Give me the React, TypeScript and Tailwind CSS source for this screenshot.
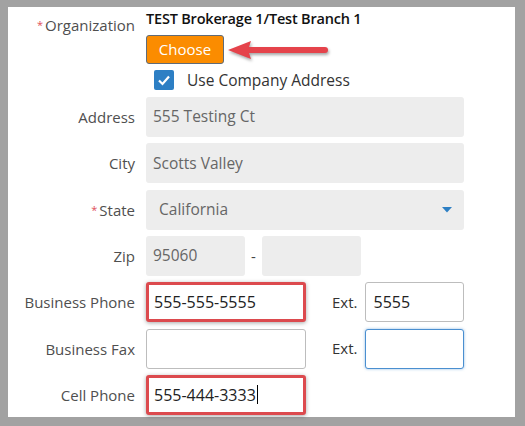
import * as React from "react";

const font = { fontFamily: "'Open Sans', Lato, sans-serif" };

function Label({ text, required }: { text: string; required?: boolean }) {
  return (
    <div className="w-[127px] shrink-0 text-right text-[15px] leading-[20px] text-[#4f4f4f]">
      {required ? <span className="mr-[2px] align-top text-[11px] text-[#e0505a]">*</span> : null}
      {text}
    </div>
  );
}

function GrayField({ value, className, children }: { value?: string; className?: string; children?: React.ReactNode }) {
  return (
    <div className={`flex h-10 items-center rounded-[3px] bg-[#ededed] px-[7px] text-[15.5px] text-[#666] ${className ?? ""}`}>
      {value}
      {children}
    </div>
  );
}

function WhiteField({
  value,
  variant,
  className,
  caret,
}: {
  value?: string;
  variant?: "normal" | "marked" | "focus";
  className?: string;
  caret?: boolean;
}) {
  const border =
    variant === "marked"
      ? "border-[3px] border-[#dc4a4e] shadow-[0_1px_4px_rgba(0,0,0,0.35)] px-[5px]"
      : variant === "focus"
        ? "border border-[#4a8fd0] shadow-[0_0_3px_rgba(74,143,208,0.6)] px-[7px]"
        : "border border-[#bdbdbd] px-[7px]";
  return (
    <div className={`flex h-10 items-center rounded-[3px] bg-white text-[16px] text-[#222] ${border} ${className ?? ""}`}>
      {value}
      {caret ? <span className="ml-[1px] inline-block h-[19px] w-px bg-black" /> : null}
    </div>
  );
}

function Row({ label, required, children }: { label: string; required?: boolean; children: React.ReactNode }) {
  return (
    <div className="flex items-center">
      <Label text={label} required={required} />
      <div className="ml-[11px] flex items-center">{children}</div>
    </div>
  );
}

function Arrow() {
  return (
    <svg width="104" height="22" viewBox="0 0 104 22" className="ml-[3px] drop-shadow-[1px_2px_1.5px_rgba(0,0,0,0.35)]">
      <line x1="18" y1="11" x2="98" y2="11" stroke="#e5434b" strokeWidth="6" strokeLinecap="round" />
      <polygon points="1,11 24,2 21,11 24,20" fill="#e5434b" />
    </svg>
  );
}

export default function App() {
  return (
    <div className="h-[426px] w-[525px] bg-[#a2a2a2] pb-[9px] pl-[8px] pr-[10px] pt-[7px]" style={font}>
      <div className="h-full bg-white">
        <div className="flex pt-[2px]">
          <div className="mt-[6px]">
            <Label text="Organization" required />
          </div>
          <div className="ml-[11px] flex flex-col">
            <div className="text-[14.5px] font-semibold leading-[20px] tracking-[-0.2px] text-[#111]">TEST Brokerage 1/Test Branch 1</div>
            <div className="mt-[6px] flex items-center">
              <button
                type="button"
                className="h-[29px] w-[78px] rounded-[3px] border border-[#5f6b78] bg-[#fb8c00] text-[15px] text-white"
              >
                Choose
              </button>
              <Arrow />
            </div>
            <div className="mt-[6px] flex items-center pl-[8px]">
              <span className="flex h-5 w-5 items-center justify-center rounded-[2px] bg-[#2d7fc4]">
                <svg width="14" height="14" viewBox="0 0 14 14">
                  <polyline points="2,7.5 5.5,11 12,3.5" fill="none" stroke="white" strokeWidth="2.2" />
                </svg>
              </span>
              <span className="ml-[13px] text-[15.5px] leading-[20px] text-[#333]">Use Company Address</span>
            </div>
          </div>
        </div>

        <div className="mt-[7px] flex flex-col gap-[6.33px]">
          <Row label="Address">
            <GrayField value="555 Testing Ct" className="w-[318px]" />
          </Row>
          <Row label="City">
            <GrayField value="Scotts Valley" className="w-[318px]" />
          </Row>
          <Row label="State" required>
            <GrayField className="w-[318px] justify-between pl-[13px] pr-[12px]">
              <span>California</span>
              <svg width="10" height="6" viewBox="0 0 10 6">
                <polygon points="0,0 10,0 5,5.5" fill="#2d7fc4" />
              </svg>
            </GrayField>
          </Row>
          <Row label="Zip">
            <GrayField value="95060" className="w-[99px]" />
            <span className="mx-[6px] text-[15px] text-[#444]">-</span>
            <GrayField className="w-[99px]" />
          </Row>
          <Row label="Business Phone">
            <WhiteField value="555-555-5555" variant="marked" className="w-[160px]" />
            <span className="ml-[26px] mr-[8px] text-[15px] text-[#333]">Ext.</span>
            <WhiteField value="5555" className="w-[99px]" />
          </Row>
          <Row label="Business Fax">
            <WhiteField className="w-[160px]" />
            <span className="ml-[26px] mr-[8px] text-[15px] text-[#333]">Ext.</span>
            <WhiteField variant="focus" className="w-[99px]" />
          </Row>
          <Row label="Cell Phone">
            <WhiteField value="555-444-3333" variant="marked" caret className="w-[160px]" />
          </Row>
        </div>
      </div>
    </div>
  );
}
